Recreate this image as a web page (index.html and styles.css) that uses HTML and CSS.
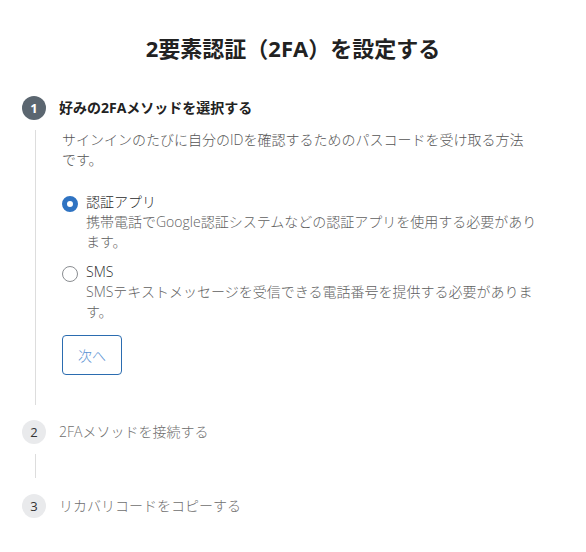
FILE: index.html
```html
<!DOCTYPE html>
<html lang="ja">
<head>
<meta charset="utf-8">
<title>2要素認証（2FA）を設定する</title>
<link rel="stylesheet" href="styles.css">
</head>
<body>
<main class="page">
  <h1 class="title">2要素認証（2FA）を設定する</h1>

  <section class="step step-active">
    <div class="step-header">
      <span class="step-num">1</span>
      <span class="step-label">好みの2FAメソッドを選択する</span>
    </div>
    <div class="step-body">
      <p class="step-desc">サインインのたびに自分のIDを確認するためのパスコードを受け取る方法です。</p>
      <div class="options">
        <label class="option">
          <span class="radio radio-checked"></span>
          <span class="option-text">
            <span class="option-title">認証アプリ</span>
            <span class="option-desc">携帯電話でGoogle認証システムなどの認証アプリを使用する必要があり<br>ます。</span>
          </span>
        </label>
        <label class="option">
          <span class="radio"></span>
          <span class="option-text">
            <span class="option-title">SMS</span>
            <span class="option-desc">SMSテキストメッセージを受信できる電話番号を提供する必要がありま<br>す。</span>
          </span>
        </label>
      </div>
      <button class="btn-next" type="button">次へ</button>
    </div>
  </section>

  <section class="step">
    <div class="step-header">
      <span class="step-num">2</span>
      <span class="step-label">2FAメソッドを接続する</span>
    </div>
    <div class="step-body step-body-empty"></div>
  </section>

  <section class="step">
    <div class="step-header">
      <span class="step-num">3</span>
      <span class="step-label">リカバリコードをコピーする</span>
    </div>
  </section>
</main>
</body>
</html>
```

FILE: styles.css
```css
* { box-sizing: border-box; }

html, body {
  margin: 0;
  padding: 0;
  background: #ffffff;
}

body {
  font-family: "Open Sans", "Noto Sans CJK JP", sans-serif;
  font-size: 14px;
  line-height: 20px;
  font-weight: 300;
  color: #555555;
}

.page {
  padding: 32px 22px 0 22px;
}

.title {
  margin: 0 0 32px 0;
  font-size: 22px;
  line-height: 32px;
  font-weight: 700;
  color: #222222;
  text-align: center;
}

.step-header {
  display: flex;
  align-items: center;
  gap: 13px;
  height: 24px;
}

.step-num {
  flex: none;
  width: 24px;
  height: 24px;
  border-radius: 50%;
  background: #e9eaec;
  color: #333333;
  font-size: 13px;
  font-weight: 400;
  line-height: 24px;
  text-align: center;
}

.step-active .step-num {
  background: #5b6670;
  color: #ffffff;
  font-weight: 700;
}

.step-label {
  color: #6e6e6e;
  font-size: 14px;
}

.step-active .step-label {
  color: #222222;
  font-weight: 700;
}

.step-body {
  margin: 10px 0 15px 13px;
  border-left: 1px solid #dddddd;
  padding: 0 32px 30px 26px;
}

.step-body-empty {
  margin: 10px 0 16px 13px;
  height: 24px;
  padding: 0;
}

.step-desc {
  margin: 0;
}

.options {
  margin-top: 22px;
  display: flex;
  flex-direction: column;
  gap: 10px;
}

.option {
  display: flex;
  align-items: flex-start;
  gap: 8px;
}

.radio {
  flex: none;
  width: 16px;
  height: 16px;
  margin-top: 4px;
  border-radius: 50%;
  border: 1px solid #8a8d91;
  background: #ffffff;
}

.radio-checked {
  border: 5px solid #2f73c2;
  background: #ffffff;
}

.option-text {
  display: flex;
  flex-direction: column;
}

.option-title {
  color: #2a2a2a;
}

.option-desc {
  color: #5f5f5f;
  white-space: nowrap;
}

.btn-next {
  margin-top: 13px;
  width: 60px;
  height: 40px;
  border: 1px solid #2b6cb0;
  border-radius: 4px;
  background: #ffffff;
  color: #5b93d3;
  font-family: "Open Sans", "Noto Sans CJK JP", sans-serif;
  font-size: 14px;
  font-weight: 300;
  padding: 0;
}
```
